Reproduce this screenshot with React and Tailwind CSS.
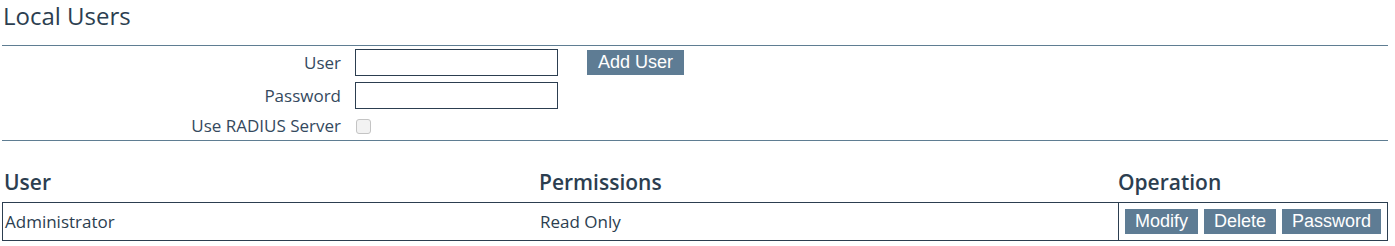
import React from 'react';

const btn = "h-[25px] px-[10px] bg-[#5e7c94] text-white text-[18px] leading-[25px] font-['Liberation_Sans',Arial,sans-serif]";

const App = () => {
  return (
    <div className="w-[1386px] ml-[2px] bg-white text-[#2c3e50] font-['Open_Sans',sans-serif]">
      {/* titulo */}
      <div className="h-[46px] border-b border-[#5f7d92]">
        <h1 className="pl-[1px] text-[24px] leading-[32px] font-normal">Local Users</h1>
      </div>

      {/* formulario */}
      <div className="grid grid-cols-[339px_203px_auto] gap-x-[14px] gap-y-[6px] pt-[3px] border-b border-[#5f7d92] text-[17px] text-[#34495e]">
        <label className="h-[27px] flex items-center justify-end">User</label>
        <input type="text" className="h-[27px] border border-[#2c3e50] outline-none px-1" />
        <div className="flex items-center">
          <button className={btn + " ml-[15px] w-[97px]"}>Add User</button>
        </div>

        <label className="h-[27px] flex items-center justify-end">Password</label>
        <input type="password" className="h-[27px] border border-[#2c3e50] outline-none px-1" />
        <div />

        <label className="h-[25px] pb-[3px] flex items-center justify-end">Use RADIUS Server</label>
        <div className="h-[25px] pb-[3px] flex items-center">
          <input type="checkbox" className="appearance-none ml-[1px] w-[15px] h-[15px] rounded-[3px] border border-[#c4c4c4] bg-[#f2f2f2]" />
        </div>
        <div />
      </div>

      {/* tabla */}
      <div className="grid grid-cols-[535px_580px_1fr] pt-[27px] pb-[6px] text-[21px] leading-[28px] font-semibold">
        <div className="pl-[2px]">User</div>
        <div className="pl-[2px]">Permissions</div>
        <div className="pl-[1px]">Operation</div>
      </div>
      <div className="grid grid-cols-[535px_580px_1fr] border border-[#2c3e50] text-[17px]">
        <div className="flex items-center pl-[2px]">Administrator</div>
        <div className="flex items-center pl-[2px]">Read Only</div>
        <div className="flex items-center gap-[6px] py-[6px] pl-[6px] border-l border-[#2c3e50]">
          <button className={btn}>Modify</button>
          <button className={btn}>Delete</button>
          <button className={btn}>Password</button>
        </div>
      </div>
    </div>
  );
};

export default App;
